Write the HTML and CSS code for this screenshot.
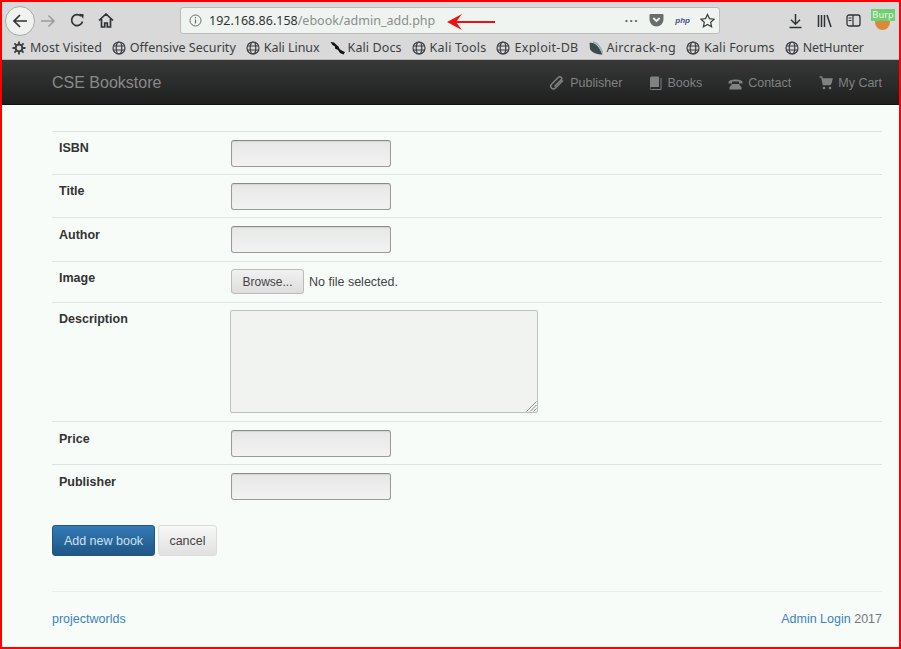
FILE: index.html
```html
<!DOCTYPE html>
<html lang="en">
<head>
<meta charset="utf-8">
<title>CSE Bookstore</title>
<link rel="stylesheet" href="styles.css">
</head>
<body>
<svg class="defs" width="0" height="0" aria-hidden="true">
  <symbol id="globe" viewBox="0 0 14 14"><g fill="none" stroke="#3c3f42" stroke-width="1.2"><circle cx="7" cy="7" r="6"/><ellipse cx="7" cy="7" rx="2.8" ry="6"/><path d="M1.4 5h11.2M1.4 9h11.2"/></g></symbol>
</svg>
<div class="frame">
  <div class="toolbar">
    <div class="nav-btns">
      <span class="back"><svg width="16" height="16" viewBox="0 0 16 16"><path d="M15 8H2M8 2L2 8l6 6" fill="none" stroke="#2f3336" stroke-width="1.7"/></svg></span>
      <svg class="fwd" width="16" height="16" viewBox="0 0 16 16"><path d="M1 8h13M8.500 2.500L14 8l-5.500 5.500" fill="none" stroke="#9a9c9e" stroke-width="1.500"/></svg>
      <svg class="reload" width="15" height="15" viewBox="0 0 15 15"><path d="M12.500 8.500A5.500 5.500 0 1 1 11 3.200" fill="none" stroke="#2f3336" stroke-width="1.700"/><path d="M9 1l4.500 0v4.500z" fill="#2f3336" transform="rotate(6 11 3)"/></svg>
      <svg class="home" width="16" height="15" viewBox="0 0 16 15"><path d="M1 7.500L8 1l7 6.500M3.500 6v8h3.200v-4h2.600v4h3.200V6" fill="none" stroke="#2f3336" stroke-width="1.700"/></svg>
    </div>
    <div class="urlbar">
      <svg class="info" width="13" height="13" viewBox="0 0 13 13"><circle cx="6.500" cy="6.500" r="5.500" fill="none" stroke="#6a6c6e"/><path d="M6.500 5.500v4M6.500 3v1.300" stroke="#6a6c6e" stroke-width="1.200"/></svg>
      <span class="url"><span class="host">192.168.86.158</span>/ebook/admin_add.php</span>
      <svg class="arrow" width="50" height="18" viewBox="0 0 50 18"><path d="M48 9H8" stroke="#ee1111" stroke-width="2"/><path d="M0 9l15-8-6 8 6 8z" fill="#ee1111"/></svg>
      <span class="url-end">
        <span class="dots">•••</span>
        <svg width="15" height="14" viewBox="0 0 15 14"><path d="M1.500 1h12a1 1 0 0 1 1 1v4.500a7 7 0 0 1-14 0V2a1 1 0 0 1 1-1z" fill="#6a6c6e"/><path d="M4.300 5l3.200 3 3.200-3" fill="none" stroke="#eef2ee" stroke-width="1.800"/></svg>
        <span class="php">php</span>
        <svg width="15" height="15" viewBox="0 0 16 15"><path d="M8 1l2.100 4.500 4.900.6-3.600 3.300 1 4.800L8 11.800l-4.400 2.400 1-4.800L1 6.100l4.900-.6z" fill="none" stroke="#3c3f42" stroke-width="1.300"/></svg>
      </span>
    </div>
    <div class="tools">
      <svg width="15" height="16" viewBox="0 0 15 16"><path d="M7.500 1v10M3 6.800l4.500 4.500L12 6.800M1.500 14.500h12" fill="none" stroke="#2f3336" stroke-width="1.500"/></svg>
      <svg width="15" height="14" viewBox="0 0 15 14"><path d="M1.500 1v12M4.500 1v12M7.500 1v12M10 1l4 12" fill="none" stroke="#2f3336" stroke-width="1.500"/></svg>
      <svg width="15" height="13" viewBox="0 0 15 13"><rect x="1" y="1" width="13" height="11" rx="2" fill="none" stroke="#2f3336" stroke-width="1.300"/><path d="M7 1v11M2.500 4h3M2.500 6.500h3" stroke="#2f3336" stroke-width="1.200"/></svg>
      <span class="burp-wrap"><span class="burp-dot"></span><span class="burp">Burp</span></span>
    </div>
  </div>
  <div class="bookmarks">
    <span class="bm"><svg width="14" height="14" viewBox="0 0 14 14"><circle cx="7" cy="7" r="3.400" fill="none" stroke="#3c3f42" stroke-width="2"/><path d="M7 .5v3M7 10.500v3M.5 7h3M10.500 7h3M2.400 2.400l2.200 2.200M9.400 9.400l2.200 2.200M11.600 2.400L9.400 4.600M4.600 9.400l-2.200 2.200" stroke="#3c3f42" stroke-width="1.800"/></svg>Most Visited</span>
    <span class="bm"><svg width="14" height="14"><use href="#globe"/></svg>Offensive Security</span>
    <span class="bm bm-linux"><svg width="14" height="14"><use href="#globe"/></svg>Kali Linux</span>
    <span class="bm bm-docs"><svg width="15" height="14" viewBox="0 0 15 14"><path d="M.5 1l3.500.5 2 2 2.500 2 1 2.500 3 2 2.500 1-1.500 2.500-3.500-1.500-2-3-3-1.500L5 5.500 2.500 4z" fill="#111"/></svg>Kali Docs</span>
    <span class="bm bm-tools"><svg width="14" height="14"><use href="#globe"/></svg>Kali Tools</span>
    <span class="bm bm-exploit"><svg width="14" height="14"><use href="#globe"/></svg>Exploit-DB</span>
    <span class="bm bm-air"><svg width="14" height="14" viewBox="0 0 14 14"><path d="M.5 2C5 .5 10 5 13.500 13.500 8 13.500 3 12 1 8z" fill="#3f4a4c"/><path d="M4 1C8 1.500 11.500 6 13.500 12" fill="none" stroke="#8fb0c8" stroke-width="1.600"/></svg>Aircrack-ng</span>
    <span class="bm bm-forums"><svg width="14" height="14"><use href="#globe"/></svg>Kali Forums</span>
    <span class="bm bm-net"><svg width="14" height="14"><use href="#globe"/></svg>NetHunter</span>
  </div>
  <nav class="navbar">
    <a class="brand" href="#">CSE Bookstore</a>
    <ul class="nav-links">
      <li class="nav-publisher"><svg width="15" height="14" viewBox="0 0 15 14"><path d="M14 4.500L6.500 12a2.600 2.600 0 0 1-4-3.700L9.500 1.300a1.800 1.800 0 0 1 2.700 2.600L5.500 10.500" fill="none" stroke="#7f8282" stroke-width="1.500"/></svg>Publisher</li>
      <li><svg width="13" height="14" viewBox="0 0 13 14"><path d="M1 2a1.500 1.500 0 0 1 1.500-1.500H10V11H2.500A1.500 1.500 0 0 0 1 12.500z" fill="#7f8282"/><path d="M1 12.500A1.200 1.200 0 0 0 2.500 13.500H12V2" fill="none" stroke="#7f8282"/></svg>Books</li>
      <li class="nav-contact"><svg width="15" height="13" viewBox="0 0 15 13"><path d="M.5 5C1 1.500 14 1.500 14.500 5v1.500h-3.500V4.500h-7v2H.5z" fill="#7f8282"/><path d="M4 7h7l2.500 3.500v2h-12v-2z" fill="#7f8282"/></svg>Contact</li>
      <li class="nav-cart"><svg width="14" height="14" viewBox="0 0 14 14"><path d="M.5 1h2.300l1.500 7.500h7.500M3.200 3H13l-1 4H4" fill="none" stroke="#7f8282" stroke-width="1.400"/><path d="M3.500 3h9.500l-1 4H4.200z" fill="#7f8282"/><circle cx="5" cy="12" r="1.300" fill="#7f8282"/><circle cx="11" cy="12" r="1.300" fill="#7f8282"/></svg>My Cart</li>
    </ul>
  </nav>
  <main class="content">
    <form class="book-form">
      <table class="form-table">
        <tr class="row-tight"><th>ISBN</th><td><input class="field" type="text"></td></tr>
        <tr class="row-tight"><th>Title</th><td><input class="field" type="text"></td></tr>
        <tr class="row-author"><th>Author</th><td><input class="field" type="text"></td></tr>
        <tr class="row-image row-tight"><th>Image</th><td><div class="file-row"><span class="browse">Browse...</span><span class="nofile">No file selected.</span></div></td></tr>
        <tr class="row-desc row-tight"><th>Description</th><td><div class="desc-wrap"><textarea class="desc"></textarea><svg class="grip" width="12" height="12" viewBox="0 0 12 12"><path d="M11.500 1.500L1.500 11.500M11.500 5L5 11.500M11.500 8.500L8.500 11.500" stroke="#8e908e" stroke-width="1"/></svg></div></td></tr>
        <tr><th>Price</th><td><input class="field" type="text"></td></tr>
        <tr><th>Publisher</th><td><input class="field" type="text"></td></tr>
      </table>
      <div class="actions">
        <button class="btn btn-primary" type="button">Add new book</button>
        <button class="btn btn-default" type="button">cancel</button>
      </div>
    </form>
    <footer class="footer">
      <a href="#">projectworlds</a>
      <span class="foot-right"><a href="#">Admin Login</a> 2017</span>
    </footer>
  </main>
</div>
</body>
</html>
```
FILE: styles.css
```css
* { box-sizing: border-box; }
html, body { margin: 0; padding: 0; }
body { width: 901px; height: 649px; overflow: hidden; font-family: "Liberation Sans", Arial, sans-serif; font-size: 14px; color: #333; }
.defs { position: absolute; }
.frame { width: 901px; height: 649px; border: 2px solid #f00; display: flex; flex-direction: column; background: #f8fcf9; overflow: hidden; }

.toolbar { height: 34px; background: #d9d9d9; display: flex; align-items: center; padding: 3px 0 0 3px; flex: none; }
.nav-btns { display: flex; align-items: center; width: 175px; flex: none; }
.back { width: 30px; height: 30px; border-radius: 50%; border: 1px solid #a8a8a8; background: #f0f2f0; display: flex; align-items: center; justify-content: center; }
.fwd { margin-left: 5px; }
.reload { margin-left: 14px; }
.home { margin-left: 13px; }
.urlbar { width: 540px; height: 27px; background: #f0f4f0; border: 1px solid #bcbcbc; border-radius: 3px; display: flex; align-items: center; padding: 0 4px 0 8px; margin-top: -1px; flex: none; }
.url { font-family: "Noto Sans", sans-serif; font-size: 12.500px; color: #8a8c8e; margin-left: 7px; white-space: nowrap; }
.host { color: #2f3336; }
.arrow { margin: 4px 0 0 12px; }
.url-end { margin-left: auto; display: flex; align-items: center; gap: 10px; }
.dots { font: 8px "Liberation Sans", sans-serif; color: #5f6163; letter-spacing: 2px; }
.php { font: italic bold 8px "Liberation Sans", sans-serif; color: #474f8c; margin-left: 1px; }
.tools { display: flex; align-items: center; gap: 14px; margin-left: 68px; }
.burp-wrap { position: relative; width: 24px; height: 22px; margin-left: -4px; }
.burp-dot { position: absolute; left: 4px; top: 5px; width: 15px; height: 15px; border-radius: 50%; background: #d9893a; }
.burp { position: absolute; left: 0; top: -1px; width: 24px; height: 12px; background: #6fd06f; color: #eef8ee; font: 9px/12px "DejaVu Sans", sans-serif; text-align: center; }

.bookmarks { height: 24px; background: #d9d9d9; border-bottom: 1px solid #b8b8b8; display: flex; align-items: center; padding-left: 10px; gap: 10px; flex: none; font-family: "Noto Sans", sans-serif; font-size: 12.500px; color: #3c3f42; }
.bm { display: flex; align-items: center; gap: 4px; white-space: nowrap; }
.bm-linux { letter-spacing: -0.050px; }
.bm-docs { gap: 3px; letter-spacing: 0.100px; }
.bm-tools { letter-spacing: 0.200px; }
.bm-exploit { letter-spacing: 0.300px; }
.bm-air { letter-spacing: 0.300px; }
.bm-forums { letter-spacing: 0.150px; }
.bm-net { letter-spacing: -0.150px; }

.navbar { height: 45px; flex: none; background: linear-gradient(#383838, #1e2020); border-bottom: 1px solid #111; display: flex; align-items: center; justify-content: space-between; padding: 2px 17px 0 50px; }
.brand { color: #8a8a8a; font-size: 16px; text-decoration: none; }
.nav-links { list-style: none; display: flex; margin: 0; padding: 0; gap: 27px; color: #808282; font-size: 12.500px; }
.nav-links li { display: flex; align-items: center; gap: 5px; }
.nav-links .nav-publisher { gap: 6px; }
.nav-links .nav-contact { margin-left: -1px; }
.nav-links .nav-cart { margin-left: 1px; }

.content { flex: 1; padding: 26px 17px 0 50px; display: flex; flex-direction: column; }
.form-table { width: 830px; border-collapse: collapse; }
.form-table th, .form-table td { border-top: 1px solid #e0e4e1; padding: 8px 7px 7px; vertical-align: top; text-align: left; }
.form-table th { width: 172px; font-size: 12.500px; line-height: 18px; color: #333; }
.form-table td { padding-left: 7px; height: 43px; }
.form-table .row-tight th { padding-top: 7px; }
.form-table .row-author td { height: 44px; }
.field { display: block; width: 160px; height: 27px; border: 1px solid #9a9c9a; border-top-color: #8a8c8a; border-radius: 3px; background: linear-gradient(#e6e8e6, #f2f2f2); box-shadow: inset 0 1px 1px rgba(0, 0, 0, .08); }
.form-table .row-image td { height: 41px; padding-top: 7px; }
.file-row { display: flex; align-items: center; height: 25px; }
.browse { display: inline-block; width: 73px; height: 25px; line-height: 25px; text-align: center; border: 1px solid #bbb; border-radius: 3px; background: linear-gradient(#f1f1f1, #dedede); font-size: 12px; color: #444; }
.nofile { margin-left: 5px; font-size: 12.500px; color: #444; }
.desc-wrap { position: relative; width: 308px; margin-left: -1px; }
.desc { display: block; width: 308px; height: 103px; border: 1px solid #bcc0bc; border-radius: 2px; background: #f0f3f0; resize: none; }
.grip { position: absolute; right: 1px; bottom: 1px; }
.form-table .row-desc td { height: 119px; padding-top: 7px; }
.form-table tr:last-child th, .form-table tr:last-child td { padding-bottom: 0; }
.actions { margin-top: 17px; display: flex; gap: 3px; flex: none; }
.btn { height: 31px; border-radius: 3px; font: 12.500px "Liberation Sans", sans-serif; padding: 1px 0 0; white-space: nowrap; }
.btn-primary { width: 103px; color: #cfe0ee; border: 1px solid #245580; background: linear-gradient(#337ab7, #1f5685); }
.btn-default { width: 59px; color: #444; border: 1px solid #dcdcdc; background: linear-gradient(#f8f8f8, #e0e0e0); }
.footer { margin-top: 35px; border-top: 1px solid #e9ece9; padding-top: 20px; display: flex; justify-content: space-between; font-size: 12.500px; line-height: 15px; color: #777; }
.footer a { color: #3b83bd; text-decoration: none; }
```
